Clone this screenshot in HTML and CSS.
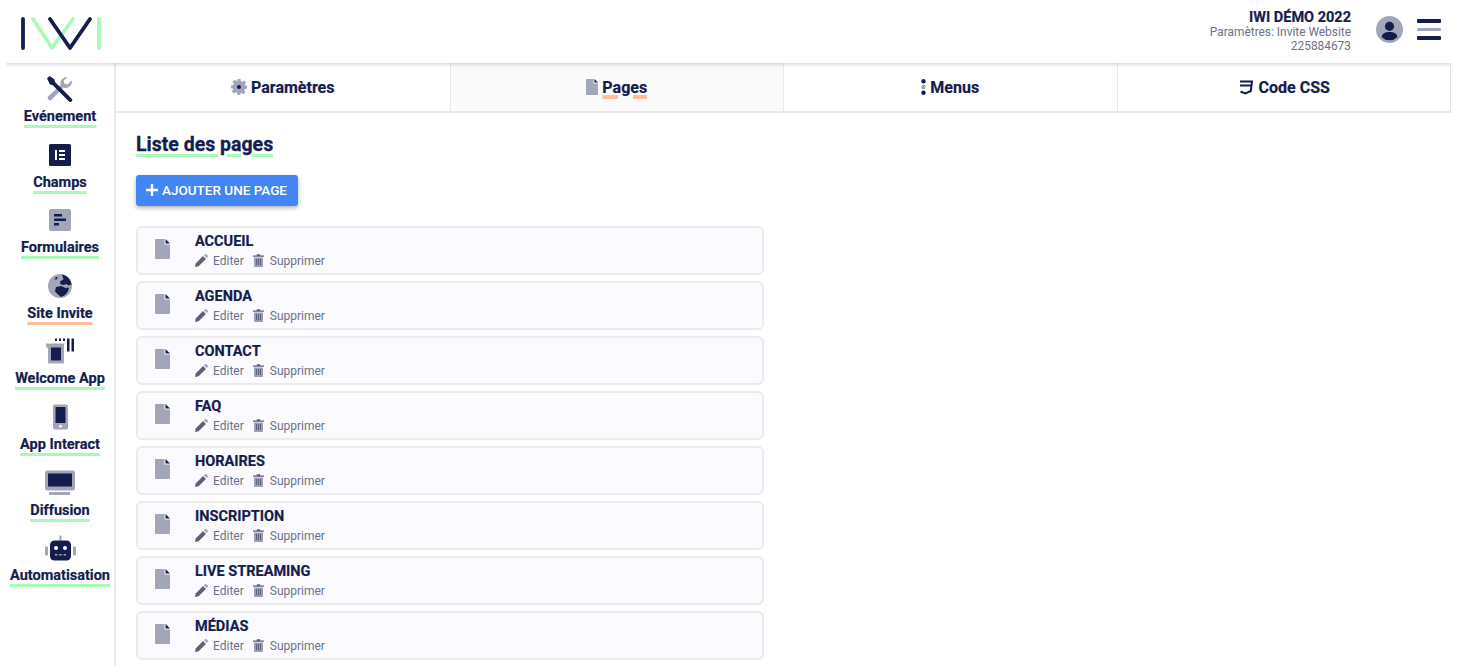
FILE: index.html
```html
<!DOCTYPE html>
<html lang="fr">
<head>
<meta charset="utf-8">
<title>IWI</title>
<link rel="stylesheet" href="styles.css">
</head>
<body>
<svg class="sprite" width="0" height="0" aria-hidden="true">
  <symbol id="file" viewBox="0 0 15 20"><path class="g" d="M1 0h8.500v5.500H15V19a1 1 0 0 1-1 1H1a1 1 0 0 1-1-1V1a1 1 0 0 1 1-1z"/><path class="d" d="M10.500 0 15 4.500h-4.500z"/></symbol>
  <symbol id="pen" viewBox="0 0 13 13"><path fill="#5d6079" d="M0 13l.7-3.600L8 2.100l2.900 2.900-7.300 7.300z"/><path fill="#a3a6b8" d="M8.900 1.300 10 .3a1 1 0 0 1 1.400 0l1.300 1.300a1 1 0 0 1 0 1.400l-1 1.100z"/></symbol>
  <symbol id="trash" viewBox="0 0 11 13"><path fill="#5d6079" d="M0 1.500h3.500L4 .3h3l.5 1.200H11v1.200H0z"/><path fill="#9b9eb2" d="M1 3.400h9v8.600a1 1 0 0 1-1 1H2a1 1 0 0 1-1-1z"/><path stroke="#5d6079" d="M3.500 5v6M5.500 5v6M7.500 5v6"/></symbol>
</svg>
<div class="app">
  <header class="topbar">
    <svg class="logo" viewBox="0 0 82 33" width="82" height="33">
      <g fill="none" stroke-width="3.800" stroke-linecap="round" stroke-linejoin="round">
        <path stroke="#a9f9b9" d="M12 2l19 29L52 2M78 2v29"/>
        <path stroke="#141d4d" d="M2 2v29M29 2l20 29L69 2"/>
      </g>
    </svg>
    <div class="account">
      <strong class="account-name">IWI DÉMO 2022</strong>
      <span>Paramètres: Invite Website</span>
      <span>225884673</span>
    </div>
    <svg class="avatar" viewBox="0 0 26 26" width="27" height="27">
      <circle cx="13" cy="13" r="13" fill="#a3a6b8"/>
      <circle cx="13" cy="10" r="4.400" fill="#141d4d"/>
      <path fill="#141d4d" d="M5.500 20.500c0-3.500 3-5.200 7.500-5.200s7.500 1.700 7.500 5.200a11 11 0 0 1-15 0z"/>
    </svg>
    <div class="burger"><i></i><i class="mid"></i><i></i></div>
  </header>
  <div class="body">
    <nav class="sidebar">
      <a class="nav-item">
        <svg viewBox="0 0 26 26" width="26" height="26"><path fill="#a3a6b8" d="M25 5.500a6.500 6.500 0 0 1-8.700 6.100L5 23.500a2.400 2.400 0 0 1-3.500-3.400l12-11.200A6.500 6.500 0 0 1 20.500 1l-3.800 3.600.8 3.200 3.200.8L24.400 4.500q.6.500.6 1z"/><path fill="#141d4d" d="M0 2.500 2.500 0l5 3.500.5 2.500 16.500 16.500a1.800 1.800 0 0 1-2.500 3L5.500 9 3 8.500z"/></svg>
        <span class="label">Evénement</span>
      </a>
      <a class="nav-item">
        <svg viewBox="0 0 22 22" width="22" height="22"><rect width="22" height="22" rx="1.500" fill="#141d4d"/><path fill="#fff" d="M6 6h2v10H6zM10 6h6v2h-6zM10 10h6v2h-6zM10 14h6v2h-6z"/></svg>
        <span class="label">Champs</span>
      </a>
      <a class="nav-item">
        <svg viewBox="0 0 22 22" width="22" height="22"><rect width="22" height="22" rx="2.500" fill="#a3a6b8"/><path fill="#141d4d" d="M5 5h8v2.500H5zM5 9.500h12V12H5zM5 14h5v2.500H5z"/></svg>
        <span class="label">Formulaires</span>
      </a>
      <a class="nav-item">
        <svg viewBox="0 0 24 24" width="24" height="24"><circle cx="12" cy="12" r="12" fill="#a3a6b8"/><path fill="#141d4d" d="M14 .5c5 1 9 5 9.500 10l-3 1-2-1.500-3 1-3.500-1 .5-3 3-1.500zM8 13l5.500-1 4 2 3.500-.5c-.5 4-3 8-8 9.500l-3-2.500-3-3zM8 3l2 .5-1.500 2H6.500z"/></svg>
        <span class="label active">Site Invite</span>
      </a>
      <a class="nav-item">
        <svg viewBox="0 0 28 25" width="28" height="25"><path fill="#a3a6b8" d="M0 5h18v19a1 1 0 0 1-1 1H3a1 1 0 0 1-1-1V10L0 8z"/><rect x="5" y="9" width="10" height="13" fill="#141d4d"/><path fill="#141d4d" d="M9 0h2v2.500H9zM13 0h2v2.500h-2zM17 0h2v2.500h-2zM21 0h2.500v13H21zM25.500 0H28v13h-2.500z"/></svg>
        <span class="label">Welcome App</span>
      </a>
      <a class="nav-item">
        <svg viewBox="0 0 15 25" width="15" height="25"><rect width="15" height="25" rx="2" fill="#a3a6b8"/><rect x="2.500" y="2.500" width="10" height="16" fill="#141d4d"/><circle cx="7.500" cy="21.700" r="1.400" fill="#fff"/></svg>
        <span class="label">App Interact</span>
      </a>
      <a class="nav-item">
        <svg viewBox="0 0 30 25" width="30" height="25"><rect width="30" height="20" rx="2" fill="#a3a6b8"/><rect x="3" y="3" width="24" height="13" fill="#141d4d"/><rect x="4" y="21.500" width="21" height="3" fill="#a3a6b8"/></svg>
        <span class="label">Diffusion</span>
      </a>
      <a class="nav-item">
        <svg viewBox="0 0 31 25" width="31" height="25"><rect x="14.500" y="0" width="2" height="5" fill="#a3a6b8"/><rect x="0" y="11" width="3" height="9" rx="1" fill="#a3a6b8"/><rect x="28" y="11" width="3" height="9" rx="1" fill="#a3a6b8"/><rect x="5" y="5" width="21" height="20" rx="4.500" fill="#141d4d"/><circle cx="11" cy="12.500" r="2" fill="#fff"/><circle cx="20" cy="12.500" r="2" fill="#fff"/><path fill="#a3a6b8" d="M10 18.500h2.500V20H10zM14.200 18.500h2.500V20h-2.500zM18.500 18.500H21V20h-2.500z"/></svg>
        <span class="label">Automatisation</span>
      </a>
    </nav>
    <main class="main">
      <div class="tabs">
        <a class="tab">
          <svg viewBox="0 0 16 16" width="16" height="16"><path fill="#a3a6b8" d="M6.500 0h3l.4 2.200 1.300.6 1.900-1.300 2.100 2.100-1.300 1.900.6 1.300L16 6.500v3l-2.200.4-.6 1.300 1.300 1.900-2.100 2.100-1.900-1.300-1.300.6L9.500 16h-3l-.4-2.200-1.300-.6-1.900 1.300-2.100-2.100 1.300-1.900-.6-1.300L0 9.500v-3l2.200-.4.6-1.300L1.500 2.900 3.600.8l1.900 1.300 1.300-.6z"/><circle cx="8" cy="8" r="2" fill="#141d4d"/></svg>
          <span>Paramètres</span>
        </a>
        <a class="tab selected">
          <svg class="tab-file" width="12" height="16"><use href="#file"/></svg>
          <span class="active">Pages</span>
        </a>
        <a class="tab">
          <svg viewBox="0 0 5 16" width="5" height="16"><circle cx="2.500" cy="2.200" r="2.200" fill="#141d4d"/><circle cx="2.500" cy="8" r="2.200" fill="#a3a6b8"/><circle cx="2.500" cy="13.800" r="2.200" fill="#141d4d"/></svg>
          <span>Menus</span>
        </a>
        <a class="tab">
          <svg class="css-icon" viewBox="0 0 15 15" width="15" height="15"><path fill="none" stroke="#141d4d" stroke-width="2" d="M2 1.500h12l-1.200 9.500-5.300 2.500-5-2M2 5.500h10.500"/></svg>
          <span>Code CSS</span>
        </a>
      </div>
      <section class="content">
        <h1 class="title">Liste des pages</h1>
        <button class="add-btn"><svg viewBox="0 0 12 12" width="12" height="12"><path fill="none" stroke="#fff" stroke-width="2.400" d="M6 0v12M0 6h12"/></svg>AJOUTER UNE PAGE</button>
        <ul class="pages">
          <li class="page"><svg class="page-icon" width="15" height="20"><use href="#file"/></svg><div class="page-text"><div class="page-name">ACCUEIL</div><div class="page-actions"><svg width="13" height="13"><use href="#pen"/></svg><span class="edit">Editer</span><svg width="11" height="13"><use href="#trash"/></svg><span>Supprimer</span></div></div></li>
          <li class="page"><svg class="page-icon" width="15" height="20"><use href="#file"/></svg><div class="page-text"><div class="page-name">AGENDA</div><div class="page-actions"><svg width="13" height="13"><use href="#pen"/></svg><span class="edit">Editer</span><svg width="11" height="13"><use href="#trash"/></svg><span>Supprimer</span></div></div></li>
          <li class="page"><svg class="page-icon" width="15" height="20"><use href="#file"/></svg><div class="page-text"><div class="page-name">CONTACT</div><div class="page-actions"><svg width="13" height="13"><use href="#pen"/></svg><span class="edit">Editer</span><svg width="11" height="13"><use href="#trash"/></svg><span>Supprimer</span></div></div></li>
          <li class="page"><svg class="page-icon" width="15" height="20"><use href="#file"/></svg><div class="page-text"><div class="page-name">FAQ</div><div class="page-actions"><svg width="13" height="13"><use href="#pen"/></svg><span class="edit">Editer</span><svg width="11" height="13"><use href="#trash"/></svg><span>Supprimer</span></div></div></li>
          <li class="page"><svg class="page-icon" width="15" height="20"><use href="#file"/></svg><div class="page-text"><div class="page-name">HORAIRES</div><div class="page-actions"><svg width="13" height="13"><use href="#pen"/></svg><span class="edit">Editer</span><svg width="11" height="13"><use href="#trash"/></svg><span>Supprimer</span></div></div></li>
          <li class="page"><svg class="page-icon" width="15" height="20"><use href="#file"/></svg><div class="page-text"><div class="page-name">INSCRIPTION</div><div class="page-actions"><svg width="13" height="13"><use href="#pen"/></svg><span class="edit">Editer</span><svg width="11" height="13"><use href="#trash"/></svg><span>Supprimer</span></div></div></li>
          <li class="page"><svg class="page-icon" width="15" height="20"><use href="#file"/></svg><div class="page-text"><div class="page-name">LIVE STREAMING</div><div class="page-actions"><svg width="13" height="13"><use href="#pen"/></svg><span class="edit">Editer</span><svg width="11" height="13"><use href="#trash"/></svg><span>Supprimer</span></div></div></li>
          <li class="page"><svg class="page-icon" width="15" height="20"><use href="#file"/></svg><div class="page-text"><div class="page-name">MÉDIAS</div><div class="page-actions"><svg width="13" height="13"><use href="#pen"/></svg><span class="edit">Editer</span><svg width="11" height="13"><use href="#trash"/></svg><span>Supprimer</span></div></div></li>
          <li class="page"></li>
        </ul>
      </section>
    </main>
  </div>
</div>
</body>
</html>
```
FILE: styles.css
```css
* { box-sizing: border-box; }
html, body { margin: 0; height: 666px; overflow: hidden; background: #fff; }
body { font-family: Roboto, "Liberation Sans", sans-serif; color: #141d4d; }
.sprite { position: absolute; }
.g { fill: #a3a6b8; }
.d { fill: #141d4d; }
.app { margin: 0 29px 0 6px; display: flex; flex-direction: column; height: 666px; overflow: hidden; }
.topbar { height: 63px; flex: none; display: flex; align-items: center; padding: 0 10px 0 15px; background: #fff; box-shadow: 0 1px 4px rgba(0,0,0,.2); position: relative; z-index: 2; clip-path: inset(0 0 -6px 0); }
.logo { margin-top: 4px; }
.account { margin-left: auto; display: flex; flex-direction: column; align-items: flex-end; font-size: 11.9px; line-height: 14px; color: #6e7188; margin-top: -1px; }
.account-name { font-size: 14.5px; line-height: 15px; color: #141d4d; font-weight: 700; -webkit-text-stroke: .2px #141d4d; }
.avatar { margin: 0 0 4px 25px; flex: none; }
.burger { margin: 0 0 4px 14px; width: 24px; display: flex; flex-direction: column; gap: 5px; flex: none; }
.burger i { display: block; height: 3.5px; background: #141d4d; border-radius: 1px; }
.burger .mid { background: #a3a6b8; }
.body { flex: 1; display: flex; min-height: 0; overflow: hidden; }
.sidebar { width: 110px; flex: none; border-right: 2px solid #e9e9e9; display: flex; flex-direction: column; padding-top: 13px; }
.nav-item { height: 65.6px; flex: none; display: flex; flex-direction: column; align-items: center; }
.nav-item svg { height: 26px; flex: none; }
.label { margin-top: 5px; font-size: 14.5px; line-height: 20px; font-weight: 700; white-space: nowrap; -webkit-text-stroke: .2px #141d4d; text-decoration: underline #a9f9b9 3px; text-underline-offset: 4px; }
.label.active { text-decoration: underline #ffbf9c 3px; text-underline-offset: 4px; }
.main { flex: 1; min-width: 0; overflow: hidden; }
.tabs { display: grid; grid-template-columns: repeat(4, 1fr); height: 50px; border-bottom: 2px solid #e9e9e9; border-right: 1px solid #e4e4e4; }
.tab { display: flex; align-items: center; justify-content: center; gap: 4px; font-size: 16px; font-weight: 700; -webkit-text-stroke: .2px #141d4d; border-left: 1px solid #e9e9e9; }
.tab:first-child { border-left: 0; }
.tab.selected { background: #fafafa; }
.tab .active { text-decoration: underline #ffbf9c 3.5px; text-underline-offset: 2px; }
.css-icon { margin-right: 2px; }
.content { padding: 18px 20px 0; }
.title { margin: 0; font-size: 19.5px; line-height: 28px; font-weight: 700; -webkit-text-stroke: .3px #141d4d; text-decoration: underline #a9f9b9 3px; text-underline-offset: 3px; }
.add-btn { display: flex; align-items: center; gap: 4px; margin-top: 16px; height: 31px; width: 162px; padding: 0 0 2px 10px; background: #4285f4; color: #fff; border: 0; border-radius: 3px; font: 500 13.5px Roboto, sans-serif; box-shadow: 0 2px 4px rgba(0,0,0,.3); }
.pages { list-style: none; margin: 20px 0 0; padding: 0; width: 628px; display: flex; flex-direction: column; gap: 6px; }
.page { height: 49px; flex: none; display: flex; align-items: center; padding-left: 17px; background: #fbfaff; border: 2px solid #ebebeb; border-radius: 6px; }
.page-icon { margin-right: 25px; flex: none; margin-top: -3px; }
.page-text { padding-top: 1px; }
.page-name { font-size: 14.5px; line-height: 18px; font-weight: 700; -webkit-text-stroke: .2px #141d4d; }
.page-actions { display: flex; align-items: center; font-size: 12px; line-height: 18px; color: #6e7188; margin-top: 1px; }
.page-actions span { margin-left: 6px; }
.page-actions .edit { margin-left: 5px; margin-right: 9px; }
```
